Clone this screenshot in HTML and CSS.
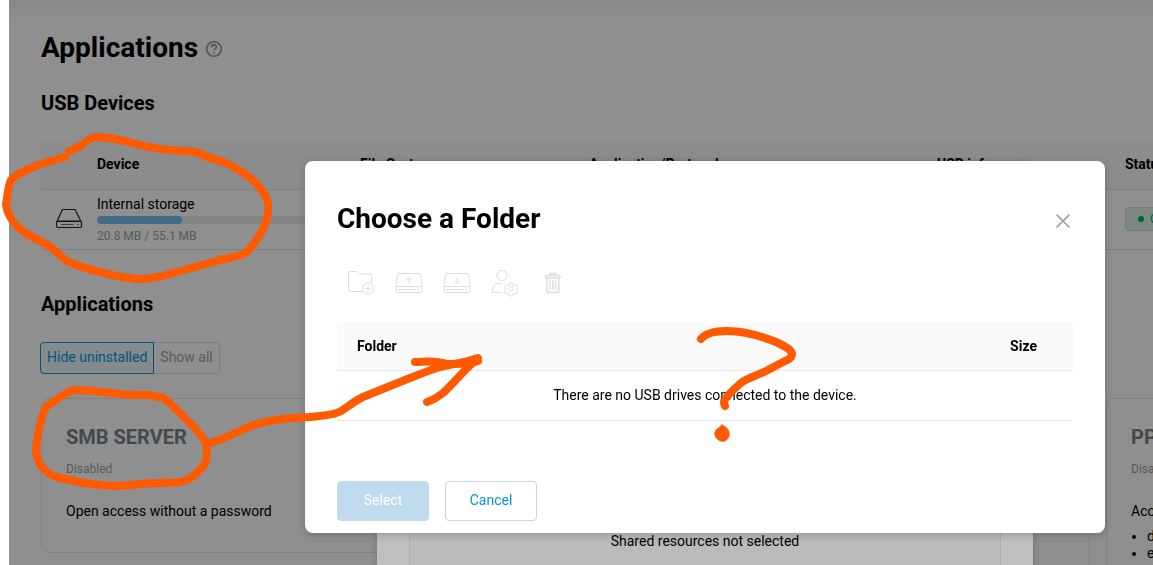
FILE: index.html
```html
<!DOCTYPE html>
<html lang="en">
<head>
<meta charset="utf-8">
<title>Applications</title>
<link rel="stylesheet" href="styles.css">
</head>
<body>
<main class="page">
  <header class="page-head">
    <h1 class="title">Applications</h1>
    <button class="help" type="button" aria-label="Help">
      <svg width="18" height="18" viewBox="0 0 18 18"><circle cx="9" cy="9" r="7.3"/><path d="M6.600 7.200C6.600 5.600 7.600 4.900 9 4.900s2.400.8 2.400 2.100c0 1.700-2.300 1.700-2.300 3.500M9.100 12v1.400"/></svg>
    </button>
  </header>

  <h2 class="section-title">USB Devices</h2>
  <table class="devices">
    <colgroup><col class="c-icon"><col class="c-device"><col class="c-fs"><col class="c-app"><col class="c-usb"><col></colgroup>
    <thead>
      <tr><th></th><th>Device</th><th>File System</th><th>Application/Protocol</th><th>USB info</th><th>Status</th></tr>
    </thead>
    <tbody>
      <tr>
        <td class="drive-cell">
          <svg class="drive" width="28" height="22" viewBox="0 0 28 22"><path d="M7.500 1.500h12.500L26 13.500V13.500H2zM3 13h22a1.500 1.500 0 0 1 1.500 1.500v3.500a1.500 1.500 0 0 1-1.500 1.500H3A1.500 1.500 0 0 1 1.500 18v-3.500A1.500 1.500 0 0 1 3 13z"/><path class="thin" d="M6 16.500h13M22 16.500h2"/></svg>
        </td>
        <td>
          <div class="usage">
            <span>Internal storage</span>
            <div class="track"><div class="fill"></div></div>
            <small class="muted">20.8 MB / 55.1 MB</small>
          </div>
        </td>
        <td></td><td></td><td></td>
        <td><span class="status">Connected</span></td>
      </tr>
    </tbody>
  </table>

  <h2 class="section-title apps-title">Applications</h2>
  <div class="toggle">
    <button class="toggle-item active" type="button">Hide uninstalled</button>
    <button class="toggle-item" type="button">Show all</button>
  </div>

  <div class="cards">
    <section class="card">
      <h3 class="card-title">SMB SERVER</h3>
      <p class="card-state">Disabled</p>
      <p class="card-text">Open access without a password</p>
    </section>
    <section class="card tall"></section>
    <section class="card tall">
      <h3 class="card-title">PPTP SERVER</h3>
      <p class="card-state">Disabled</p>
      <p class="card-text">Access</p>
      <ul class="card-list"><li>devices</li><li>external network</li></ul>
    </section>
  </div>
</main>

<div class="shade"></div>
<section class="back-dialog">
  <div class="shared">Shared resources not selected</div>
</section>

<div class="shade"></div>
<section class="dialog" role="dialog" aria-labelledby="dialog-title">
  <header class="dialog-head">
    <h2 class="title" id="dialog-title">Choose a Folder</h2>
    <button class="close" type="button" aria-label="Close"><svg width="20" height="20" viewBox="0 0 20 20"><path d="M4 4l12 12M16 4L4 16"/></svg></button>
  </header>
  <div class="tools">
    <button class="tool" type="button" aria-label="New folder"><svg width="32" height="32" viewBox="0 0 32 32"><path d="M17.500 25.500H5.500a2 2 0 0 1-2-2V7a1.500 1.500 0 0 1 1.500-1.500h6.500l3 2.500H25A1.500 1.500 0 0 1 26.500 9.500v7.500"/><circle cx="23" cy="22.500" r="5.500"/><path d="M23 19.500v6M20 22.500h6"/></svg></button>
    <button class="tool" type="button" aria-label="Upload"><svg width="32" height="32" viewBox="0 0 32 32"><path d="M6 7.500h20a1.500 1.500 0 0 1 1.500 1.300L29 20.500H3L4.500 8.800A1.500 1.500 0 0 1 6 7.500zM3 20.500V25a1.500 1.500 0 0 0 1.500 1.500h23A1.500 1.500 0 0 0 29 25v-4.500M5.500 23.500h17M25 23.500h1.500M16 18v-6M13 14.500l3-3 3 3"/></svg></button>
    <button class="tool" type="button" aria-label="Download"><svg width="32" height="32" viewBox="0 0 32 32"><path d="M6 7.500h20a1.500 1.500 0 0 1 1.500 1.300L29 20.500H3L4.500 8.800A1.500 1.500 0 0 1 6 7.500zM3 20.500V25a1.500 1.500 0 0 0 1.500 1.500h23A1.500 1.500 0 0 0 29 25v-4.500M5.500 23.500h17M25 23.500h1.500M16 11.500v6M13 15l3 3 3-3"/></svg></button>
    <button class="tool" type="button" aria-label="User rights"><svg width="32" height="32" viewBox="0 0 32 32"><circle cx="13" cy="9.500" r="5"/><path d="M13.500 26.500H3.700V23a5.500 5.500 0 0 1 5.500-5.500h4"/><circle cx="22" cy="23" r="2.200"/><path d="M20.500 17h3l.4 2.100 1.300.7 2-.7 1.500 2.600-1.600 1.300v1l1.600 1.300-1.500 2.600-2-.7-1.300.7-.4 2.100h-3l-.4-2.100-1.300-.7-2 .7-1.500-2.600 1.600-1.300v-1l-1.600-1.300 1.500-2.600 2 .7 1.300-.7z"/></svg></button>
    <button class="tool" type="button" aria-label="Delete"><svg class="bin" width="32" height="32" viewBox="0 0 32 32"><path d="M8 12h15.500M9.800 12v12.500a2 2 0 0 0 2 2h8a2 2 0 0 0 2-2V12M8.500 12v-1A1.500 1.500 0 0 1 10 9.500h11.500a1.500 1.500 0 0 1 1.500 1.500v1M12.800 9.500V7.500h6v2M13 14.500v9M15.800 14.500v9M18.600 14.500v9"/></svg></button>
  </div>
  <table class="folders">
    <thead><tr><th>Folder</th><th class="size">Size</th></tr></thead>
    <tbody><tr><td colspan="2">There are no USB drives connected to the device.</td></tr></tbody>
  </table>
  <footer class="actions">
    <button class="btn primary" type="button" disabled>Select</button>
    <button class="btn" type="button">Cancel</button>
  </footer>
</section>

<svg class="ink" width="1153" height="565" viewBox="0 0 1153 565" aria-hidden="true">
  <path d="M69 151C74 149 78 148 82 145S90 137 97 137C112 137 125 141 140 145S165 150 182 151C193 151 198 152 205 156C212 159 220 160 230 165C239 170 248 175 255 182C262 190 267 196 268 203C269 214 267 222 262 231C256 242 251 248 247 252C243 256 227 258 217 261L173 273C160 277 150 279 140 279C124 279 111 275 96 271C85 268 74 265 67 261C60 257 56 250 49 246C37 239 29 236 20 229C10 220 7 212 6 205C7 198 8 186 11 180C15 175 24 171 33 167C43 163 54 160 65 157"/>
  <path d="M162 397C158 398 155 397 152 395C140 395 129 395 120 394C105 392 92 391 80 390C75 390 71 390 68 392L47 406C44 409 42 417 40 424C38 433 36 442 36 450C36 457 38 462 42 467C46 472 50 475 56 477C65 479 75 481 84 483C100 486 120 487 140 484C155 483 168 483 180 482C186 481 190 479 193 476C199 471 204 467 206 461C207 455 208 447 205 441C202 436 197 431 193 426C182 416 172 404 162 397"/>
  <path d="M212 442C222 441 238 430 257 424C276 418 295 418 310 417C322 416 333 415 339 412C347 408 354 401 363 397L400 382C413 377 427 371 440 367C454 364 467 362 478 358M415 362C425 362 434 360 447 364C456 364 467 365 478 361M474 362C463 371 453 384 443 393C438 397 433 400 427 402"/>
  <path d="M701 339C705 334 714 331 727 331C745 331 761 336 776 342C783 345 792 350 792 354C792 358 788 360 783 362L766 371C756 376 747 378 741 383C734 389 730 393 726 398C723 401 724 404 725 406"/>
  <path class="dot" d="M722 425C727 427 730 431 729 436C728 440 724 442 721 441C717 440 714 436 715 432C716 429 719 428 722 425z"/>
</svg>
</body>
</html>
```

FILE: styles.css
```css
* { box-sizing: border-box; }

body {
  margin: 0;
  height: 100vh;
  overflow: hidden;
  background: #fff;
  color: #000;
  font: 14px/20px Roboto, "Liberation Sans", sans-serif;
}

button { font: inherit; cursor: pointer; }
h1, h2, h3, p, ul { margin: 0; }
svg { display: block; fill: none; stroke: currentColor; stroke-linejoin: round; }

.page {
  height: 100vh;
  margin-left: 9px;
  padding: 30px 0 0 32px;
  overflow: hidden;
  background: linear-gradient(#f4f4f4, #fff 24px);
}

.page-head { display: flex; align-items: center; gap: 7px; }
.title { font-size: 28px; line-height: 36px; font-weight: 700; }
.help { margin-top: 2px; padding: 0; border: 0; background: none; color: #8f979d; }
.help svg { stroke-width: 1.6; }

.section-title {
  margin: 25px 0 26px;
  font-size: 20px;
  line-height: 24px;
  font-weight: 700;
}

.devices {
  width: 1583px;
  table-layout: fixed;
  border-collapse: collapse;
  text-align: left;
}
.c-icon { width: 56px; }
.c-device { width: 263px; }
.c-fs { width: 229px; }
.c-app { width: 348px; }
.c-usb { width: 188px; }
.devices th, .devices td { padding: 0; border-bottom: 1px solid #e4e4e4; }
.devices th { height: 48px; padding-bottom: 2px; background: #fafafa; }
.devices td { height: 60px; }
.drive { margin: 0 auto; color: #222; stroke-width: 1.2; }
.thin { stroke-width: 1; stroke: #777; }
.usage { display: grid; gap: 2px; width: 243px; padding-top: 2px; }
.track { height: 8px; border-radius: 4px; background: #ebebeb; }
.fill { width: 85px; height: 8px; border-radius: 4px; background: #75c0ee; }
.muted { font-size: 12px; line-height: 20px; color: #999ea1; }

.status {
  display: inline-flex;
  align-items: center;
  gap: 6px;
  height: 24px;
  padding: 0 12px;
  border: 1px solid #bfe3d0;
  border-radius: 4px;
  background: #e0f3e8;
  color: #00a85a;
  font-size: 12px;
}
.status::before { content: ""; width: 6px; height: 6px; border-radius: 50%; background: #00b060; }

.apps-title { margin: 42px 0 26px; }

.toggle { display: flex; margin-left: -1px; }
.toggle-item {
  height: 32px;
  padding: 0 6px 2px;
  border: 1px solid #e0e0e0;
  border-left: 0;
  border-radius: 0 4px 4px 0;
  background: none;
  color: #9b9fa1;
}
.toggle-item.active {
  border: 1px solid #0098dc;
  border-radius: 4px 0 0 4px;
  background: #eef7fc;
  color: #0098dc;
}

.cards { display: flex; align-items: flex-start; gap: 16px; margin-top: 24px; }
.card {
  flex: 0 0 516px;
  min-height: 155px;
  padding: 24px;
  border: 1px solid #e6e6e6;
  border-radius: 8px;
}
.card.tall { flex-basis: 517px; min-height: 240px; }
.card-title { font-size: 20px; line-height: 28px; font-weight: 700; color: #76848c; }
.card-state { margin: 8px 0 22px; font-size: 12px; color: #999ea1; }
.card-list { padding-left: 16px; line-height: 17px; margin-top: 7px; }

.shade { position: fixed; inset: 0 0 0 9px; background: rgba(0, 0, 0, .25); }

.back-dialog {
  position: fixed;
  inset: 162px 120px -40px 377px;
  display: flex;
  align-items: flex-end;
  padding: 0 32px;
  border-radius: 8px;
  background: #fff;
  box-shadow: 0 2px 8px rgba(0, 0, 0, .2);
}
.shared {
  flex: 1;
  height: 88px;
  padding-top: 13px;
  border: 1px solid #e8e8e8;
  background: #fafafa;
  text-align: center;
}

.dialog {
  position: fixed;
  inset: 161px 48px auto 305px;
  padding: 40px 32px 12px;
  border-radius: 8px;
  background: #fff;
  box-shadow: 0 2px 8px rgba(0, 0, 0, .2);
}
.dialog-head { display: flex; align-items: center; justify-content: space-between; }
.close { margin-top: 4px; padding: 0; border: 0; background: none; color: #959ca1; }
.close svg { stroke-width: 1.6; stroke-linecap: round; }

.tools { display: flex; gap: 16px; margin: 29px 0 24px 8px; }
.tool { padding: 0; border: 0; background: none; color: #d9dddf; }
.bin { stroke-width: 1.4; }

.folders { width: 100%; border-collapse: collapse; }
.folders th, .folders td { border-bottom: 1px solid #e8e8e8; }
.folders th { height: 48px; padding: 0 20px; background: #fafafa; text-align: left; }
.folders .size { padding-right: 36px; text-align: right; }
.folders td { height: 50px; padding: 0; text-align: center; }

.actions { display: flex; gap: 16px; margin-top: 60px; }
.btn {
  width: 92px;
  height: 40px;
  padding: 0 0 2px;
  border: 1px solid #bfdaec;
  border-radius: 4px;
  background: #fff;
  color: #0d92da;
}
.btn.primary { background: #c0dbed; border-color: #c0dbed; color: #fff; }

.ink {
  position: absolute;
  top: 0;
  left: 0;
  pointer-events: none;
  color: #ff5a00;
  stroke-width: 8;
  stroke-linecap: round;
}
.dot { fill: #ff5a00; stroke-width: 1; }
```
